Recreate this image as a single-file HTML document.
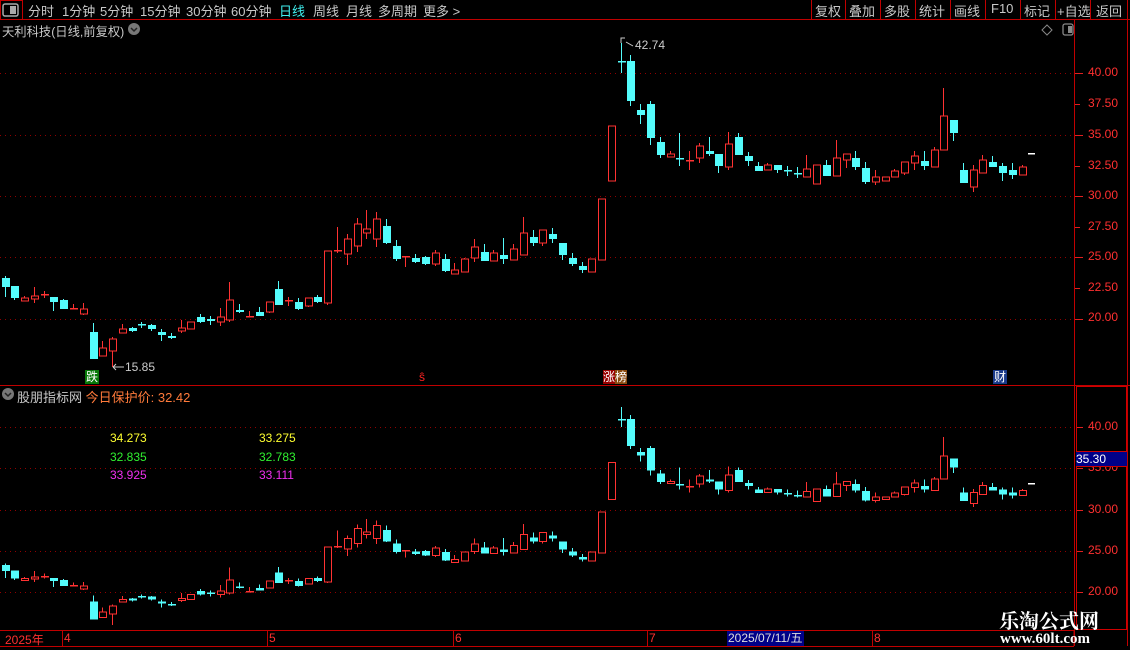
<!DOCTYPE html>
<html><head><meta charset="utf-8"><style>
*{margin:0;padding:0}
body{width:1130px;height:650px;background:#000;overflow:hidden;position:relative;font-family:"Liberation Sans","Noto Sans CJK SC",sans-serif;font-size:13px;color:#c8c8c8}
.a{position:absolute;white-space:nowrap}
</style></head><body>
<svg id="s" width="1130" height="650" style="position:absolute;left:0;top:0" xmlns="http://www.w3.org/2000/svg">
<g stroke="#c00000" stroke-width="1" fill="none">
<line x1="0" y1="19.5" x2="1130" y2="19.5"/>
<rect x="0.5" y="0.5" width="22" height="19"/>
<line x1="811.5" y1="0" x2="811.5" y2="19"/><line x1="845.5" y1="0" x2="845.5" y2="19"/><line x1="880.5" y1="0" x2="880.5" y2="19"/><line x1="915.5" y1="0" x2="915.5" y2="19"/><line x1="950.5" y1="0" x2="950.5" y2="19"/><line x1="985.5" y1="0" x2="985.5" y2="19"/><line x1="1020.5" y1="0" x2="1020.5" y2="19"/><line x1="1055.5" y1="0" x2="1055.5" y2="19"/><line x1="1090.5" y1="0" x2="1090.5" y2="19"/><line x1="1127.5" y1="0" x2="1127.5" y2="19"/>
<line x1="1074.5" y1="19" x2="1074.5" y2="646"/>
<line x1="1127.5" y1="19" x2="1127.5" y2="646"/>
<line x1="0" y1="385.5" x2="1130" y2="385.5"/>
<rect x="1076.5" y="386.5" width="50" height="243" stroke="#d00000"/>
<line x1="0" y1="630.5" x2="1074" y2="630.5"/>
<line x1="0" y1="646.5" x2="1074" y2="646.5"/>
<line x1="62.5" y1="630" x2="62.5" y2="646"/><line x1="267.5" y1="630" x2="267.5" y2="646"/><line x1="453.5" y1="630" x2="453.5" y2="646"/><line x1="647.5" y1="630" x2="647.5" y2="646"/><line x1="872.5" y1="630" x2="872.5" y2="646"/><line x1="1074" y1="630" x2="1074" y2="646"/>
</g>
<g stroke="#900000" stroke-dasharray="1,4">
<line x1="0" y1="73.5" x2="1074" y2="73.5"/><line x1="0" y1="135.5" x2="1074" y2="135.5"/><line x1="0" y1="196.5" x2="1074" y2="196.5"/><line x1="0" y1="257.5" x2="1074" y2="257.5"/><line x1="0" y1="319.5" x2="1074" y2="319.5"/>
<line x1="0" y1="427.5" x2="1074" y2="427.5"/><line x1="0" y1="468.5" x2="1074" y2="468.5"/><line x1="0" y1="510.5" x2="1074" y2="510.5"/><line x1="0" y1="551.5" x2="1074" y2="551.5"/><line x1="0" y1="592.5" x2="1074" y2="592.5"/>
</g>
<g stroke="#e02020">
<line x1="1075" y1="73.5" x2="1083" y2="73.5"/><line x1="1075" y1="104.5" x2="1080" y2="104.5"/><line x1="1075" y1="135.5" x2="1083" y2="135.5"/><line x1="1075" y1="166.5" x2="1080" y2="166.5"/><line x1="1075" y1="196.5" x2="1083" y2="196.5"/><line x1="1075" y1="227.5" x2="1080" y2="227.5"/><line x1="1075" y1="257.5" x2="1083" y2="257.5"/><line x1="1075" y1="288.5" x2="1080" y2="288.5"/><line x1="1075" y1="319.5" x2="1083" y2="319.5"/>
<line x1="1077" y1="427.5" x2="1083" y2="427.5"/><line x1="1077" y1="468.5" x2="1083" y2="468.5"/><line x1="1077" y1="510.5" x2="1083" y2="510.5"/><line x1="1077" y1="551.5" x2="1083" y2="551.5"/><line x1="1077" y1="592.5" x2="1083" y2="592.5"/>
</g>
<rect x="3" y="4" width="15" height="12" rx="2" fill="none" stroke="#aaa" stroke-width="1.5"/><rect x="10" y="6" width="6" height="8" fill="#aaa"/>
<rect x="1063" y="24" width="10" height="11" rx="2" fill="none" stroke="#888" stroke-width="1.3"/><rect x="1068" y="26" width="4" height="7" fill="#888"/>
<path d="M1047 25 L1052 30 L1047 35 L1042 30 Z" fill="none" stroke="#888"/>
<circle cx="134" cy="29" r="6" fill="#777"/><path d="M131 28 L134 31 L137 28" stroke="#222" stroke-width="1.5" fill="none"/>
<circle cx="8" cy="394" r="6" fill="#777"/><path d="M5 393 L8 396 L11 393" stroke="#222" stroke-width="1.5" fill="none"/>
<g id="top"></g>
<g id="bot" clip-path="url(#cb)"></g>
<clipPath id="cb"><rect x="0" y="402" width="1074" height="228"/></clipPath>
<path d="M621 43 L621 38 L625 38" stroke="#ccc" fill="none"/><path d="M626 42 L633 46" stroke="#ccc"/>
<path d="M113 367 L124 367 M113 367 L116 364 M113 367 L116 370" stroke="#ccc" fill="none"/>
<rect x="1028" y="153" width="7" height="1.5" fill="#fff"/>
<rect x="1028" y="483" width="7" height="1.5" fill="#fff"/>
</svg>
<div class="a" style="left:28px;top:1px;font-size:13px">分时</div>
<div class="a" style="left:62px;top:1px">1分钟</div>
<div class="a" style="left:100px;top:1px">5分钟</div>
<div class="a" style="left:140px;top:1px">15分钟</div>
<div class="a" style="left:186px;top:1px">30分钟</div>
<div class="a" style="left:231px;top:1px">60分钟</div>
<div class="a" style="left:279px;top:1px;color:#40f0f0">日线</div>
<div class="a" style="left:313px;top:1px">周线</div>
<div class="a" style="left:346px;top:1px">月线</div>
<div class="a" style="left:378px;top:1px">多周期</div>
<div class="a" style="left:423px;top:1px">更多 &gt;</div>
<div class="a" style="left:815px;top:1px">复权</div>
<div class="a" style="left:849px;top:1px">叠加</div>
<div class="a" style="left:884px;top:1px">多股</div>
<div class="a" style="left:919px;top:1px">统计</div>
<div class="a" style="left:954px;top:1px">画线</div>
<div class="a" style="left:991px;top:1px">F10</div>
<div class="a" style="left:1024px;top:1px">标记</div>
<div class="a" style="left:1057px;top:1px">+自选</div>
<div class="a" style="left:1096px;top:1px">返回</div>
<div class="a" style="left:2px;top:22px;font-size:12.3px">天利科技(日线,前复权)</div>
<div class="a" style="left:635px;top:38px;font-size:12px;color:#ccc">42.74</div>
<div class="a" style="left:125px;top:360px;font-size:12px;color:#ccc">15.85</div>
<div class="a" style="left:85px;top:370px;background:#087808;color:#fff;font-size:12px;line-height:14px;padding:0 1px">跌</div>
<div class="a" style="left:419px;top:370px;color:#f22;font-size:12px;line-height:14px">ŝ</div>
<div class="a" style="left:603px;top:370px;color:#fff;font-size:12px;line-height:14px"><span style="background:#900">涨</span><span style="background:#8a4a10">榜</span></div>
<div class="a" style="left:993px;top:370px;background:#1a3a8a;color:#fff;font-size:12px;line-height:14px;padding:0 1px">财</div>
<div class="a" style="left:17px;top:387px">股朋指标网 <span style="color:#ff7a3a">今日保护价: 32.42</span></div>
<div class="a" style="left:110px;top:431px;font-size:12px;color:#ffff30">34.273</div>
<div class="a" style="left:259px;top:431px;font-size:12px;color:#ffff30">33.275</div>
<div class="a" style="left:110px;top:450px;font-size:12px;color:#30f030">32.835</div>
<div class="a" style="left:259px;top:450px;font-size:12px;color:#30f030">32.783</div>
<div class="a" style="left:110px;top:468px;font-size:12px;color:#f030f0">33.925</div>
<div class="a" style="left:259px;top:468px;font-size:12px;color:#f030f0">33.111</div>
<div style="position:absolute;left:1088px;top:65px;color:#ff3030;font-size:12px;line-height:14px">
<div class="a" style="top:0">40.00</div><div class="a" style="top:31px">37.50</div><div class="a" style="top:62px">35.00</div><div class="a" style="top:93px">32.50</div><div class="a" style="top:123px">30.00</div><div class="a" style="top:154px">27.50</div><div class="a" style="top:184px">25.00</div><div class="a" style="top:215px">22.50</div><div class="a" style="top:245px">20.00</div>
<div class="a" style="top:354px">40.00</div><div class="a" style="top:395px">35.00</div><div class="a" style="top:437px">30.00</div><div class="a" style="top:478px">25.00</div><div class="a" style="top:519px">20.00</div>
</div>
<div class="a" style="left:1076px;top:451px;width:51px;height:14px;background:#000088;border-top:1px solid #c00;border-bottom:1px solid #c00;color:#fff;font-size:12px;line-height:14px">35.30</div>
<div class="a" style="left:5px;top:631px;color:#ff3030;font-size:12px">2025年</div>
<div class="a" style="left:64px;top:631px;color:#ff3030;font-size:12px">4</div>
<div class="a" style="left:269px;top:631px;color:#ff3030;font-size:12px">5</div>
<div class="a" style="left:455px;top:631px;color:#ff3030;font-size:12px">6</div>
<div class="a" style="left:649px;top:631px;color:#ff3030;font-size:12px">7</div>
<div class="a" style="left:727px;top:631px;background:#000088;color:#ddd;font-size:12px;line-height:15px;padding:0 1px">2025/07/11/五</div>
<div class="a" style="left:874px;top:631px;color:#ff3030;font-size:12px">8</div>
<div class="a" style="left:999px;top:605px;color:#fff;font-weight:bold;font-size:20px;font-family:'Noto Serif CJK SC','Liberation Serif',serif">乐淘公式网</div>
<div class="a" style="left:1000px;top:631px;color:#fff;font-weight:bold;font-size:15px;font-family:'Liberation Serif',serif">www.60lt.com</div>
<script>
var d="c 276 278 287 297|c 286 286 298 300|r 296 298 301 301|r 287 296 299 303|r 291 294 295 298|c 297 297 302 311|c 299 300 309 309|r 304 308 309 309|r 303 309 314 315|c 323 332 359 359|r 341 348 356 356|r 337 339 351 367|r 324 329 333 333|c 327 328 331 332|c 322 324 325 328|c 324 325 329 331|c 329 332 335 341|c 333 336 338 339|r 320 328 331 333|r 322 322 329 329|c 314 317 322 323|c 316 319 321 325|r 308 317 322 326|r 282 300 320 322|c 304 310 312 313|r 311 316 316 317|c 307 312 316 316|r 302 302 312 313|c 281 289 305 305|r 297 300 301 306|c 298 302 309 310|r 298 298 306 307|c 295 297 302 303|r 251 251 303 305|r 227 250 250 253|r 234 239 254 265|r 218 224 246 252|r 210 229 233 239|r 212 219 239 247|c 219 226 243 244|c 240 246 259 261|r 256 256 257 267|c 254 258 262 263|c 256 257 264 265|r 250 253 264 266|c 254 259 271 272|r 263 270 274 274|r 258 259 272 272|r 239 247 258 262|c 244 252 261 261|r 250 253 261 261|c 238 255 259 264|r 244 249 260 260|r 217 233 255 255|c 230 237 243 246|r 230 230 243 246|c 228 234 239 243|c 243 243 255 260|c 253 258 264 266|c 262 266 270 273|r 259 259 272 272|r 199 199 260 260|r 126 126 181 181|c 43 61 61 73|c 55 61 101 106|c 104 110 115 124|c 101 104 138 145|c 137 142 155 158|r 151 154 157 157|c 133 158 158 166|r 151 160 160 170|r 143 146 158 163|c 137 151 154 156|c 154 154 166 173|r 132 144 167 170|c 133 137 155 155|c 152 156 161 166|c 162 166 171 171|r 163 165 170 170|c 165 165 170 173|c 166 170 170 176|c 167 173 173 178|r 155 169 177 177|r 165 165 184 184|c 160 165 176 176|r 140 158 176 176|r 154 154 160 168|c 151 158 167 170|c 162 168 182 184|r 170 177 182 185|r 177 177 181 181|r 169 171 177 177|r 162 162 173 175|r 151 156 163 170|c 151 161 166 170|r 147 150 167 167|r 88 116 150 150|c 120 120 133 141|c 163 170 183 183|r 165 170 187 192|r 155 160 173 173|c 156 162 167 167|c 163 166 173 181|c 163 170 175 179|r 165 167 175 175".split("|");
function draw(g,f){var h="";d.forEach(function(s,i){var p=s.split(" "),col=p[0]=="c"?"#54fcfc":"#ff3232",x=Math.round(4.5+9.78*i),hi=f(+p[1]),t=f(+p[2]),b=f(+p[3]),lo=f(+p[4]);
h+='<line x1="'+(x+.5)+'" y1="'+hi+'" x2="'+(x+.5)+'" y2="'+lo+'" stroke="'+col+'"/>';
if(b-t<1.5){h+='<rect x="'+(x-3)+'" y="'+Math.round(t)+'" width="8" height="1.5" fill="'+col+'"/>';}
else if(p[0]=="c"){h+='<rect x="'+(x-3)+'" y="'+t+'" width="8" height="'+(b-t)+'" fill="'+col+'"/>';}
else{h+='<rect x="'+(x-2.5)+'" y="'+t+'" width="7" height="'+(b-t)+'" fill="#000" stroke="'+col+'"/>';}});
document.getElementById(g).innerHTML=h;}
draw("top",function(y){return y});
draw("bot",function(y){return Math.round((427+(y-73)*0.673)*2)/2});
</script>
</body></html>
